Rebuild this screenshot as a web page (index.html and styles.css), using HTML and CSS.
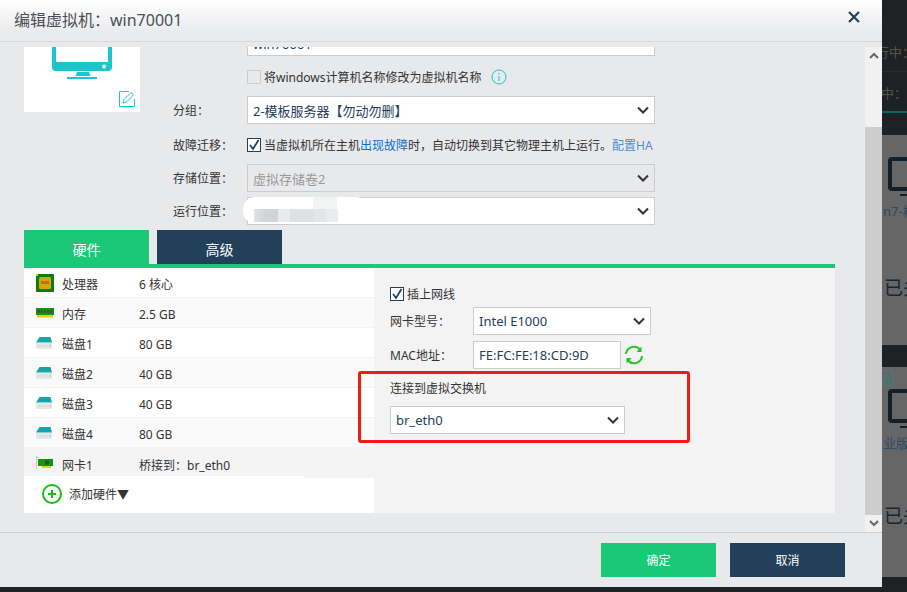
FILE: index.html
```html
<!DOCTYPE html>
<html lang="zh-CN">
<head>
<meta charset="utf-8">
<title>编辑虚拟机</title>
<link rel="stylesheet" href="styles.css">
</head>
<body>
<div class="stage">
  <section class="dialog">
    <header class="dlg-head">
      <h1 class="dlg-title">编辑虚拟机：win70001</h1>
      <svg class="close" width="12" height="12" viewBox="0 0 12 12"><path d="M1 1L11 11M11 1L1 11" stroke="#23405a" stroke-width="2.2" fill="none"/></svg>
    </header>
    <div class="dlg-main">
      <div class="scroll-view">
        <div class="scroll-inner">
          <div class="top">
            <div class="thumb">
              <svg class="monitor" width="60" height="52" viewBox="0 0 60 52"><path d="M0 0H4V30H56V0H60V35Q60 39 56 39H4Q0 39 0 35Z" fill="#1ac5cb"/><circle cx="52" cy="34.500" r="2" fill="#fff"/><path d="M25 40H37L38.500 44H23.500Z" fill="#1ac5cb"/><rect x="15" y="45" width="30" height="2" fill="#1ac5cb"/></svg>
              <svg class="edit" width="16" height="16" viewBox="0 0 16 16"><path d="M10 .5H.5V15.500H15.500V8" fill="none" stroke="#1ac5cb"/><path d="M4 12L5 8.500L12 1.500L14.500 3.800L7.500 11Z" fill="none" stroke="#1ac5cb"/></svg>
            </div>
            <div class="form">
              <div class="f-row"><span class="f-label"></span><div class="field clipped"><span class="val">win70001</span></div></div>
              <div class="f-row mt14 h14"><span class="f-label"></span>
                <span class="box"></span><span class="chk-text gap3">将windows计算机名称修改为虚拟机名称</span>
                <svg class="info" width="16" height="16" viewBox="0 0 16 16"><circle cx="8" cy="8" r="7" fill="none" stroke="#1ac5cb"/><path d="M8 4V5.500M8 7V12" stroke="#1ac5cb"/></svg>
              </div>
              <div class="f-row mt12"><span class="f-label">分组：</span><div class="field"><span class="val">2-模板服务器【勿动勿删】</span><svg class="chev" width="12" height="8" viewBox="0 0 12 8"><path d="M1 1.500L6 6.500L11 1.500" fill="none" stroke="#333" stroke-width="2"/></svg></div></div>
              <div class="f-row mt13 h15"><span class="f-label">故障迁移：</span>
                <span class="box on"><svg width="12" height="12" viewBox="0 0 12 12"><path d="M2 6L5 10L10.500 1" fill="none" stroke="#23405a" stroke-width="1.800"/></svg></span>
                <span class="chk-text gap3">当虚拟机所在主机<a class="link">出现故障</a>时，自动切换到其它物理主机上运行。<a class="link soft">配置HA</a></span>
              </div>
              <div class="f-row mt12"><span class="f-label">存储位置：</span><div class="field off"><span class="val">虚拟存储卷2</span><svg class="chev" width="12" height="8" viewBox="0 0 12 8"><path d="M1 1.500L6 6.500L11 1.500" fill="none" stroke="#333" stroke-width="2"/></svg></div></div>
              <div class="f-row mt5"><span class="f-label">运行位置：</span><div class="field"><span class="mosaic"></span><svg class="chev" width="12" height="8" viewBox="0 0 12 8"><path d="M1 1.500L6 6.500L11 1.500" fill="none" stroke="#333" stroke-width="2"/></svg></div></div>
            </div>
          </div>
          <nav class="tabs"><span class="tab active">硬件</span><span class="tab">高级</span></nav>
          <div class="panel">
            <div class="hw">
              <div class="hw-row"><svg class="hw-ico" width="18" height="18" viewBox="0 0 18 18"><rect width="18" height="18" fill="#0a7d0a"/><rect x="3" y="3" width="12" height="12" rx="1.500" fill="#d9a50c"/><rect x="5" y="7" width="8" height="3" fill="#a87c10"/><rect width="2" height="2" fill="#e8d020"/></svg><span class="hw-name">处理器</span><span>6 核心</span></div>
              <div class="hw-row"><svg class="hw-ico" width="18" height="18" viewBox="0 0 18 18"><rect y="4" width="18" height="7" fill="#0e980e"/><rect x="1" y="11" width="16" height="2.500" fill="#e4d410"/><path d="M1.500 6H16.500V9H1.500Z" fill="#35583a"/><path d="M4.500 6V9M7.500 6V9M10.500 6V9M13.500 6V9" stroke="#0e980e"/></svg><span class="hw-name">内存</span><span>2.5 GB</span></div>
              <div class="hw-row"><svg class="hw-ico" width="18" height="18" viewBox="0 0 18 18"><path d="M3.500 3H14.500L16 8.500H0Z" fill="#16a5ad"/><rect y="9" width="16" height="6" fill="#e6e8e8"/><rect x="2" y="11.500" width="9" height="1" fill="#cfd3d3"/><rect x="13.500" y="11.500" width="1" height="1" fill="#33bb55"/></svg><span class="hw-name">磁盘1</span><span>80 GB</span></div>
              <div class="hw-row"><svg class="hw-ico" width="18" height="18" viewBox="0 0 18 18"><path d="M3.500 3H14.500L16 8.500H0Z" fill="#16a5ad"/><rect y="9" width="16" height="6" fill="#e6e8e8"/><rect x="2" y="11.500" width="9" height="1" fill="#cfd3d3"/><rect x="13.500" y="11.500" width="1" height="1" fill="#33bb55"/></svg><span class="hw-name">磁盘2</span><span>40 GB</span></div>
              <div class="hw-row"><svg class="hw-ico" width="18" height="18" viewBox="0 0 18 18"><path d="M3.500 3H14.500L16 8.500H0Z" fill="#16a5ad"/><rect y="9" width="16" height="6" fill="#e6e8e8"/><rect x="2" y="11.500" width="9" height="1" fill="#cfd3d3"/><rect x="13.500" y="11.500" width="1" height="1" fill="#33bb55"/></svg><span class="hw-name">磁盘3</span><span>40 GB</span></div>
              <div class="hw-row"><svg class="hw-ico" width="18" height="18" viewBox="0 0 18 18"><path d="M3.500 3H14.500L16 8.500H0Z" fill="#16a5ad"/><rect y="9" width="16" height="6" fill="#e6e8e8"/><rect x="2" y="11.500" width="9" height="1" fill="#cfd3d3"/><rect x="13.500" y="11.500" width="1" height="1" fill="#33bb55"/></svg><span class="hw-name">磁盘4</span><span>80 GB</span></div>
              <div class="hw-row sel"><svg class="hw-ico" width="18" height="18" viewBox="0 0 18 18"><path d="M.5 2V15" stroke="#c8c8c8"/><rect x="1" y="3" width="2" height="1" fill="#c8c8c8"/><rect x="2" y="5" width="15" height="7" fill="#0c9a0c"/><rect x="9" y="6.500" width="4" height="4" fill="#2f4f35"/><rect x="6" y="12" width="9" height="2" fill="#e4d410"/></svg><span class="hw-name">网卡1</span><span>桥接到：br_eth0</span></div>
              <div class="hw-add">
                <svg width="20" height="20" viewBox="0 0 20 20"><circle cx="10" cy="10" r="9" fill="none" stroke="#12c012" stroke-width="2"/><path d="M10 6V14M6 10H14" stroke="#12c012" stroke-width="2"/></svg>
                <span>添加硬件▼</span>
              </div>
            </div>
            <div class="nic">
              <div class="nic-check"><span class="box on"><svg width="12" height="12" viewBox="0 0 12 12"><path d="M2 6L5 10L10.500 1" fill="none" stroke="#23405a" stroke-width="1.800"/></svg></span><span class="chk-text gap3">插上网线</span></div>
              <div class="nic-row mt6"><span class="nic-label">网卡型号：</span><div class="field w178"><span class="val">Intel E1000</span><svg class="chev" width="12" height="8" viewBox="0 0 12 8"><path d="M1 1.500L6 6.500L11 1.500" fill="none" stroke="#333" stroke-width="2"/></svg></div></div>
              <div class="nic-row mt6"><span class="nic-label">MAC地址：</span><div class="field w148"><span class="val">FE:FC:FE:18:CD:9D</span></div>
                <svg class="refresh" width="20" height="20" viewBox="0 0 20 20"><path d="M2 9A8 8 0 0 1 16 4.500M18 11A8 8 0 0 1 4 15.500" fill="none" stroke="#1fc41f" stroke-width="2"/><path d="M17.500 1.500V7H12.500ZM2.500 18.500V13H7.500Z" fill="#1fc41f"/></svg>
              </div>
              <div class="sw-label">连接到虚拟交换机</div>
              <div class="field w235"><span class="val">br_eth0</span><svg class="chev" width="12" height="8" viewBox="0 0 12 8"><path d="M1 1.500L6 6.500L11 1.500" fill="none" stroke="#333" stroke-width="2"/></svg></div>
              <div class="redbox"></div>
            </div>
          </div>
        </div>
      </div>
      <div class="sbar">
        <div class="sbar-end"><svg width="10" height="7" viewBox="0 0 10 7"><path d="M1 6L5 2L9 6" fill="none" stroke="#666" stroke-width="2"/></svg></div>
        <div class="sbar-rest"></div>
        <div class="sbar-thumb"></div>
        <div class="sbar-end low"><svg width="10" height="7" viewBox="0 0 10 7"><path d="M1 1L5 5L9 1" fill="none" stroke="#666" stroke-width="2"/></svg></div>
      </div>
    </div>
    <footer class="dlg-foot">
      <button class="btn ok">确定</button>
      <button class="btn cancel">取消</button>
    </footer>
  </section>
  <aside class="behind">
    <div class="bh-top">
      <div class="bh-line one">行中：</div>
      <div class="bh-line two">中：</div>
      <div class="bh-teal"></div>
    </div>
    <div class="card">
      <svg class="pc" width="40" height="40" viewBox="0 0 40 40"><rect x="2" y="2" width="36" height="30" rx="2" fill="none" stroke="#13202a" stroke-width="4"/><rect x="12" y="37" width="16" height="2" fill="#13202a"/></svg>
      <div class="card-name">n7-模板</div>
      <div class="card-state">已关</div>
    </div>
    <div class="card second">
      <span class="badge">A</span>
      <svg class="pc" width="40" height="40" viewBox="0 0 40 40"><rect x="2" y="2" width="36" height="30" rx="2" fill="none" stroke="#13202a" stroke-width="4"/><rect x="12" y="37" width="16" height="2" fill="#13202a"/></svg>
      <div class="card-name low">业版_</div>
      <div class="card-state low">已关</div>
    </div>
  </aside>
</div>
</body>
</html>
```

FILE: styles.css
```css
* { box-sizing: border-box; }
html, body { margin: 0; padding: 0; }
body {
  width: 907px;
  height: 592px;
  overflow: hidden;
  background: #1f2224;
  font-family: "Noto Sans", "Noto Sans CJK SC", sans-serif;
  font-size: 12px;
  color: #333;
}
.stage { display: flex; height: 587px; }

/* dialog */
.dialog {
  width: 882px;
  height: 587px;
  flex: none;
  display: flex;
  flex-direction: column;
  background: #e8e9eb;
}
.dlg-head {
  height: 42px;
  flex: none;
  display: flex;
  align-items: center;
  justify-content: space-between;
  padding: 0 22px 2px 14px;
  border-bottom: 1px solid #d9d9d9;
  background: linear-gradient(#fff, #e9eaec 80%);
}
.dlg-title { margin: 0; font-size: 16px; font-weight: 400; color: #4a4f54; line-height: 20px; }
.close { margin-top: -6px; }

.dlg-main { height: 490px; flex: none; padding-top: 5px; display: flex; }
.scroll-view { flex: 1; overflow: hidden; padding-left: 24px; }
.scroll-inner { margin-top: -19px; width: 811px; }

.top { display: flex; }
.thumb { position: relative; width: 116px; height: 84px; background: #fff; flex: none; margin-right: 33px; }
.monitor { display: block; margin: 4px 0 0 28px; }
.edit { position: absolute; right: 5px; bottom: 5px; }

.form { flex: none; }
.f-row { display: flex; align-items: center; }
.f-label { width: 74px; flex: none; color: #333; line-height: 16px; padding-top: 2px; white-space: nowrap; }
.h14 { height: 14px; }
.h15 { height: 15px; }
.mt5 { margin-top: 5px; }
.mt6 { margin-top: 6px; }
.mt12 { margin-top: 12px; }
.mt13 { margin-top: 13px; }
.mt14 { margin-top: 14px; }

.field {
  position: relative;
  width: 408px;
  height: 28px;
  flex: none;
  display: flex;
  align-items: center;
  justify-content: space-between;
  padding: 0 5px;
  background: #fff;
  border: 1px solid #ccc;
  color: #23405a;
  font-size: 13px;
  white-space: nowrap;
}
.field.clipped { padding-top: 4px; }
.field.off { background: #e8e9eb; color: #999; }
.w178 { width: 178px; }
.w148 { width: 148px; }
.w235 { width: 235px; }
.chev { margin-left: auto; flex: none; }
.mosaic {
  position: absolute;
  left: -5px;
  top: -1px;
  width: 125px;
  height: 26px;
  border-radius: 12px;
  background:
    linear-gradient(90deg, transparent 11px, #dfe3e6 11px, #cfd4d9 23px, #cfd4d9 35px, #e8ebed 35px, #e8ebed 47px, #dde1e4 47px, #dde1e4 71px, #e3e6e8 71px, #e3e6e8 83px, #e9eced 83px, #e9eced 95px, transparent 95px) 0 12px / 100% 13px no-repeat,
    linear-gradient(90deg, transparent 70px, #f2f4f4 70px, #f2f4f4 94px, transparent 94px) 0 0 / 100% 12px no-repeat,
    #fff;
}

.box {
  width: 14px;
  height: 14px;
  flex: none;
  display: inline-flex;
  align-items: center;
  justify-content: center;
  border: 1px solid #ccc;
}
.box.on { border-color: #23405a; background: #fff; }
.chk-text { color: #333; line-height: 16px; padding-top: 2px; white-space: nowrap; }
.gap3 { margin-left: 3px; }
.link { color: #0a6ecf; }
.link.soft { color: #4a90d0; }
.info { margin-left: 9px; }

/* tabs */
.tabs { display: flex; gap: 8px; margin-top: 5px; }
.tab {
  width: 125px;
  height: 34px;
  display: flex;
  align-items: center;
  justify-content: center;
  padding-top: 4px;
  background: #23405a;
  color: #fff;
  font-size: 14px;
}
.tab.active { background: #1bc878; height: 38px; padding-top: 0; margin-bottom: -4px; position: relative; }

.panel { display: flex; height: 249px; border-top: 4px solid #1bc878; }
.hw { width: 350px; flex: none; background: #fff; height: 245px; }
.hw-row {
  height: 30px;
  display: flex;
  align-items: center;
  padding: 3px 0 0 12px;
  border-bottom: 1px solid #f3f3f3;
  background: #fff;
  color: #333;
  white-space: nowrap;
}
.hw-row:nth-child(even) { background: #fafafa; }
.hw-row.sel { background: #f3f3f3; border-bottom: 0; }
.hw-ico { flex: none; margin: -3px 8px 0 0; }
.hw-name { width: 77px; flex: none; }
.hw-add {
  position: relative;
  height: 35px;
  display: flex;
  align-items: center;
  gap: 7px;
  padding: 0 0 4px 18px;
  background: #fff;
}
.hw-add::before {
  content: "";
  position: absolute;
  left: 0;
  top: -2px;
  width: 280px;
  height: 2px;
  background: #fff;
}

.nic {
  position: relative;
  flex: 1;
  height: 245px;
  background: #f3f3f3;
  padding: 19px 0 0 16px;
}
.nic-check { display: flex; align-items: center; height: 14px; }
.nic-row { display: flex; align-items: center; }
.nic-label { width: 83px; flex: none; white-space: nowrap; }
.refresh { margin-left: 3px; }
.sw-label { margin: 12px 0 9px; height: 16px; line-height: 16px; white-space: nowrap; }
.redbox {
  position: absolute;
  left: -16px;
  top: 103px;
  width: 332px;
  height: 72px;
  border: 3px solid #f01c14;
  border-radius: 3px;
}

/* scrollbar */
.sbar { width: 17px; flex: none; display: flex; flex-direction: column; }
.sbar-end { height: 17px; display: flex; align-items: center; justify-content: center; background: #f1f1f1; }
.sbar-rest { height: 63px; background: #f1f1f1; }
.sbar-thumb { flex: 1; background: #cdcdcd; }

/* footer */
.dlg-foot {
  flex: 1;
  display: flex;
  gap: 14px;
  padding: 10px 0 0 601px;
  border-top: 1px solid #ccc;
}
.btn {
  width: 115px;
  height: 34px;
  border: 0;
  padding: 0;
  color: #fff;
  font: inherit;
}
.btn.ok { background: #1bc878; }
.btn.cancel { background: #23405a; }

/* page behind the dialog */
.behind { width: 25px; flex: none; overflow: hidden; color: #55554c; white-space: nowrap; }
.bh-top { height: 135px; }
.bh-line { line-height: 20px; font-size: 13px; }
.bh-line.one { height: 72px; padding-top: 42px; margin-left: -6px; border-bottom: 1px solid #2a2d2f; }
.bh-line.two { height: 39px; padding-top: 11px; margin-left: -1px; }
.bh-teal { height: 2px; background: #0d6b66; width: 25px; }
.card {
  height: 210px;
  background: #666;
  padding: 22px 0 0 6px;
  overflow: hidden;
}
.card.second { height: 210px; margin-top: 22px; padding-top: 3px; }
.pc { display: block; }
.card-name { margin: 6px 0 0 -5px; color: #2c4a66; font-size: 13px; line-height: 16px; }
.card-name.low { margin-top: 6px; }
.card-state { margin: 56px 0 0 -4px; color: #1a2530; font-size: 19px; line-height: 26px; }
.card-state.low { margin-top: 52px; }
.badge {
  display: block;
  width: 15px;
  height: 16px;
  margin-left: -9px;
  margin-bottom: 3px;
  padding-left: 3px;
  border: 1px solid #3f7f7f;
  border-radius: 2px;
  color: #1d8a8a;
  font-size: 13px;
  line-height: 14px;
}
```
